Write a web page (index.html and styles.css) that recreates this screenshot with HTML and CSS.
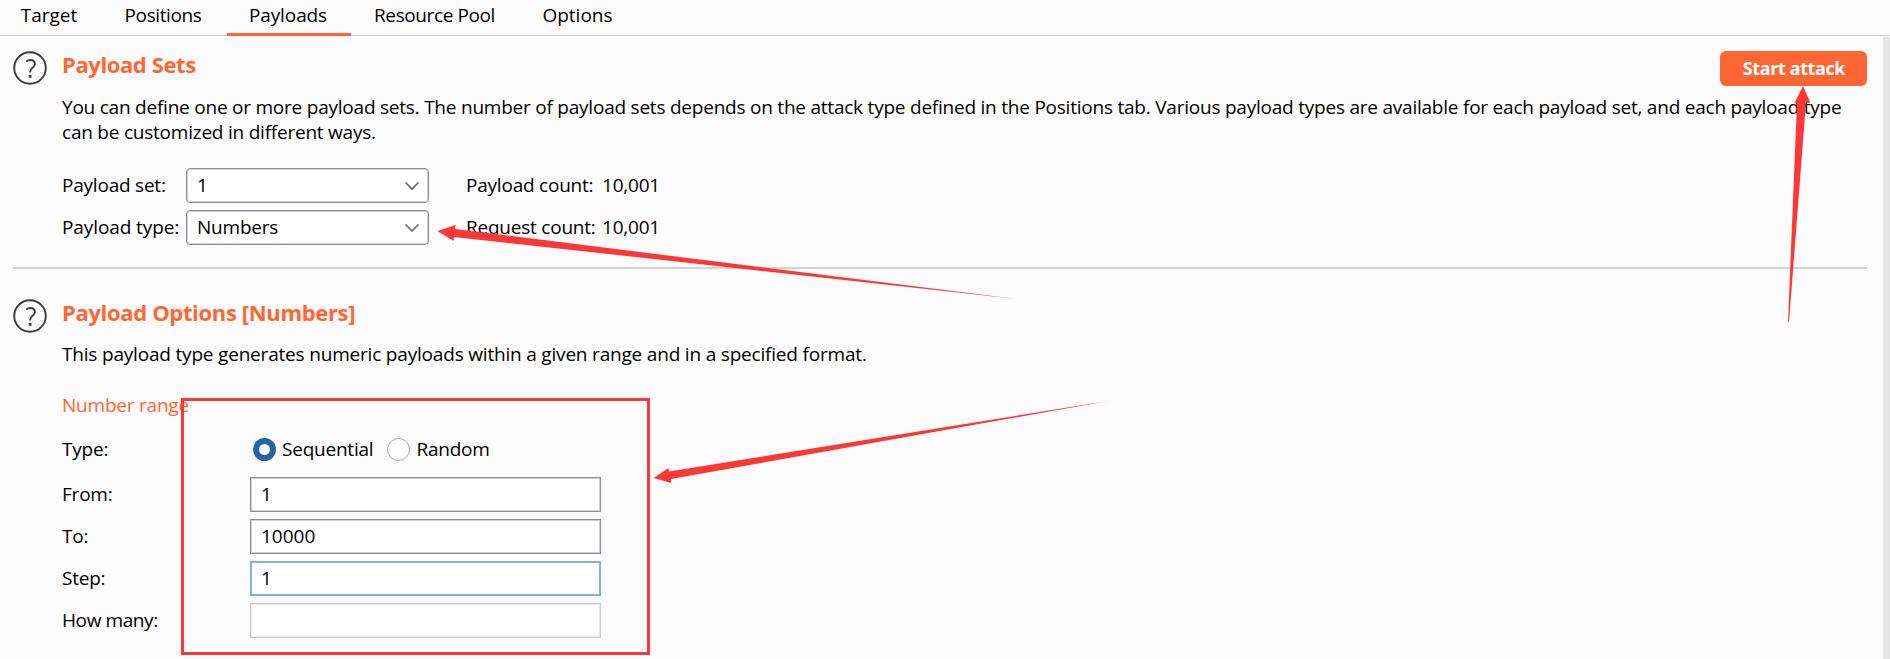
FILE: index.html
```
<!DOCTYPE html>
<html lang="en">
<head>
<meta charset="utf-8">
<title>Intruder - Payloads</title>
<link rel="stylesheet" href="styles.css">
</head>
<body>
<nav class="tabs">
  <a class="tab tab-target">Target</a>
  <a class="tab tab-positions">Positions</a>
  <a class="tab tab-payloads active">Payloads</a>
  <a class="tab tab-pool">Resource Pool</a>
  <a class="tab tab-options">Options</a>
</nav>
<div class="body">
  <main class="content">
    <section class="section">
      <svg class="help" viewBox="0 0 34 34"><circle cx="17" cy="17" r="15.8"/><path d="M13.2 10.4C14.5 9.4 15.8 9 17.3 9c2.800 0 4.500 1.500 4.500 3.900 0 1.800-.9 2.800-2.500 4.100-1.600 1.300-2.200 2.100-2.200 3.900v.6"/><rect x="15.700" y="24" width="2.800" height="2.800"/></svg>
      <div class="section-main">
        <header class="section-head">
          <h2 class="title title-sets">Payload Sets</h2>
          <button class="start">Start attack</button>
        </header>
        <p class="desc desc-sets">You can define one or more payload sets. The number of payload sets depends on the attack type defined in the Positions tab. Various payload types are available for each payload set, and each payload type<br>can be customized in different ways.</p>
        <div class="set-grid">
          <span class="label">Payload set:</span>
          <div class="select"><span>1</span><svg class="chevron" viewBox="0 0 16 10"><path d="M1.5 1.5 8 8l6.500-6.500"/></svg></div>
          <span class="label count">Payload count:</span>
          <span class="label">10,001</span>
          <span class="label label-type">Payload type:</span>
          <div class="select"><span>Numbers</span><svg class="chevron" viewBox="0 0 16 10"><path d="M1.5 1.5 8 8l6.500-6.500"/></svg></div>
          <span class="label count">Request count:</span>
          <span class="label">10,001</span>
        </div>
      </div>
    </section>
    <hr class="divider">
    <section class="section section-options">
      <svg class="help" viewBox="0 0 34 34"><circle cx="17" cy="17" r="15.8"/><path d="M13.2 10.4C14.5 9.4 15.8 9 17.3 9c2.800 0 4.500 1.500 4.500 3.900 0 1.800-.9 2.800-2.500 4.100-1.600 1.300-2.200 2.100-2.200 3.900v.6"/><rect x="15.700" y="24" width="2.800" height="2.800"/></svg>
      <div class="section-main">
        <h2 class="title">Payload Options [Numbers]</h2>
        <p class="desc desc-options">This payload type generates numeric payloads within a given range and in a specified format.</p>
        <h3 class="subtitle">Number range</h3>
        <div class="range">
          <div class="row row-type"><span class="label">Type:</span>
            <div class="radios">
              <span class="radio on"></span><span class="label sequential">Sequential</span>
              <span class="radio"></span><span class="label">Random</span>
            </div>
          </div>
          <div class="row"><span class="label">From:</span><div class="field">1</div></div>
          <div class="row"><span class="label">To:</span><div class="field">10000</div></div>
          <div class="row"><span class="label">Step:</span><div class="field focus">1</div></div>
          <div class="row"><span class="label many">How many:</span><div class="field disabled"></div></div>
        </div>
      </div>
    </section>
  </main>
  <div class="scrollbar"></div>
</div>
<svg class="marks" viewBox="0 0 1890 659">
  <rect x="182.500" y="399.500" width="466" height="254"/>
  <path d="M1803 86 1810.500 103 1806 102.500 1789 322H1788L1797 102.500 1794.500 103Z"/>
  <path d="M437.500 231 455.500 225 455 229 1017 299 454 237 453.500 241Z"/>
  <path d="M653.500 478 668.500 468 669 471.500 1108 401 671 479 671 483Z"/>
</svg>
</body>
</html>
```
FILE: styles.css
```
* { box-sizing: border-box; }
body {
  margin: 0;
  height: 659px;
  overflow: hidden;
  display: flex;
  flex-direction: column;
  position: relative;
  background: #fbfbfb;
  color: #000;
  font: 19px/25px "Open Sans", "Noto Sans", sans-serif;
  letter-spacing: -0.22px;
}
h2, h3, p { margin: 0; }

.tabs {
  display: flex;
  flex: none;
  height: 36px;
  border-bottom: 1px solid #cdcdcd;
}
.tab {
  height: 36px;
  line-height: 30px;
  border-bottom: 3px solid transparent;
  text-align: center;
  white-space: nowrap;
}
.tab-target { width: 98px; letter-spacing: 0; }
.tab-positions { width: 129px; padding-left: 1px; letter-spacing: -0.4px; }
.tab-payloads { width: 124px; padding-right: 2px; letter-spacing: -0.1px; }
.tab-pool { width: 167px; letter-spacing: -0.4px; }
.tab-options { width: 119px; letter-spacing: 0; }
.active { border-color: #ff6633; }

.body { flex: 1; display: flex; min-height: 0; }
.content { flex: 1; padding: 13px 16px 0 13px; }
.scrollbar { width: 7px; margin-top: 1px; background: #e5e5e5; }

.section { display: flex; gap: 15px; }
.section-options { padding-top: 28px; }
.help {
  width: 34px;
  height: 34px;
  flex: none;
  margin-top: 2px;
  fill: none;
  stroke: #3c3c3c;
  stroke-width: 1.9;
}
.help rect { fill: #3c3c3c; stroke: none; }
.section-main { flex: 1; min-width: 0; }
.section-head { display: flex; justify-content: space-between; height: 30px; }
.title {
  color: #ff6633;
  font-size: 22px;
  line-height: 30px;
  font-weight: 700;
  letter-spacing: -0.34px;
}
.title-sets { letter-spacing: -0.4px; }
.start {
  width: 147px;
  height: 35px;
  margin: 2px 0 0;
  padding: 0 0 1px 1px;
  border: 0;
  border-radius: 6px;
  background: #ff6633;
  color: #fff;
  font: 700 18px/34px "Open Sans", "Noto Sans", sans-serif;
  letter-spacing: -0.4px;
}
.desc { white-space: nowrap; }
.desc-sets { margin-top: 16px; letter-spacing: -0.225px; }
.desc-options { margin-top: 15px; letter-spacing: -0.19px; }

.set-grid {
  display: grid;
  grid-template-columns: 124px 243px 173px auto;
  grid-auto-rows: 35px;
  row-gap: 7px;
  margin-top: 23px;
}
.label { line-height: 35px; white-space: nowrap; }
.label-type { letter-spacing: -0.1px; }
.count { padding-left: 37px; }
.select {
  display: flex;
  align-items: center;
  justify-content: space-between;
  padding: 0 8px 0 10px;
  background: #fff;
  border: 1px solid #8f8ca0;
  border-radius: 4px;
  box-shadow: inset 0 0 0 1px #cfcdd8;
}
.chevron {
  width: 16px;
  height: 10px;
  fill: none;
  stroke: #6e6e6e;
  stroke-width: 1.7;
}
.divider {
  height: 2px;
  margin: 22px 0 0;
  border: 0;
  background: #d3d3d3;
}

.subtitle {
  margin-top: 26px;
  color: #ff6633;
  font-size: 19px;
  line-height: 25px;
  font-weight: 400;
}
.range { display: flex; flex-direction: column; gap: 7px; margin-top: 14px; }
.row { display: grid; grid-template-columns: 188px 351px; height: 35px; }
.row-type { margin-bottom: 3px; }
.many { letter-spacing: -0.4px; }
.radios { display: flex; align-items: center; padding-left: 3px; }
.radios .label { margin-left: 6px; }
.radio {
  width: 23px;
  height: 23px;
  border: 1px solid #a8a8a8;
  border-radius: 50%;
  background: #fff;
}
.radio.on { border: 6px solid #26659f; }
.sequential { margin-right: 14px; }
.field {
  padding-left: 10px;
  line-height: 33px;
  letter-spacing: 0;
  background: #fff;
  border: 1px solid #8f8ca0;
  box-shadow: inset 0 0 0 1px #cfcdd8;
}
.focus { border-color: #84aedb; box-shadow: inset 0 0 0 1px #84b2e4; }
.disabled { border-color: #cbcbcb; box-shadow: inset 0 0 0 1px #e8e8e8; }

.marks {
  position: absolute;
  left: 0;
  top: 0;
  width: 1890px;
  height: 659px;
  fill: #fb3838;
  pointer-events: none;
}
.marks rect { fill: none; stroke: #fb3838; stroke-width: 3; }
```
